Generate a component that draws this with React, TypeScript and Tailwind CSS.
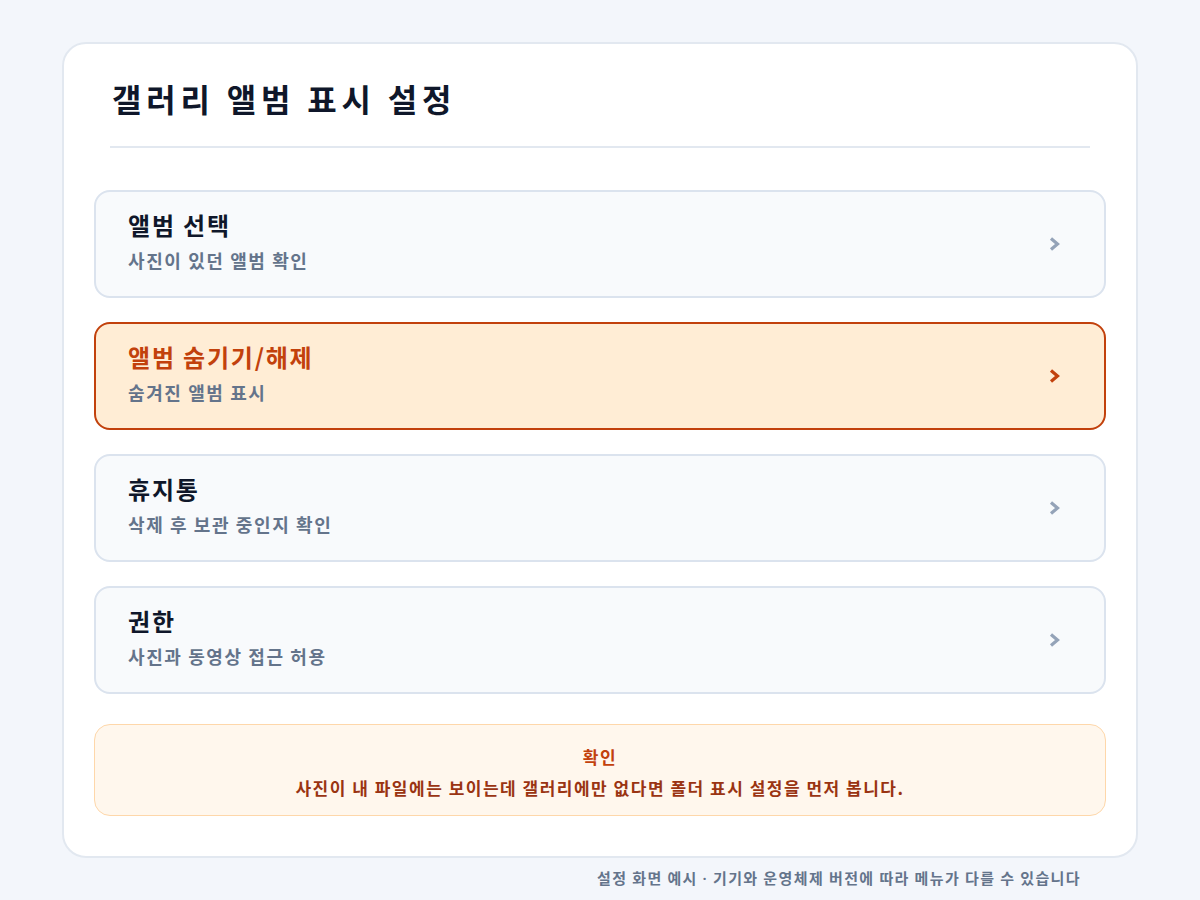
const items = [
  { title: '앨범 선택', desc: '사진이 있던 앨범 확인', active: false },
  { title: '앨범 숨기기/해제', desc: '숨겨진 앨범 표시', active: true },
  { title: '휴지통', desc: '삭제 후 보관 중인지 확인', active: false },
  { title: '권한', desc: '사진과 동영상 접근 허용', active: false },
];

function Chevron({ active }: { active: boolean }) {
  return (
    <svg
      width="14"
      height="16"
      viewBox="0 0 14 16"
      className={`translate-y-[3px] ${active ? 'text-[#c2410c]' : 'text-[#94a3b8]'}`}
    >
      <path d="M4 2.5 L10.5 8 L4 13.5" fill="none" stroke="currentColor" strokeWidth="3.2" strokeLinejoin="miter" />
    </svg>
  );
}

export default function App() {
  return (
    <div
      className="min-h-screen bg-[#f3f6fb] pt-[42px] px-[62px]"
      style={{ fontFamily: '"Noto Sans CJK KR", "Noto Sans", sans-serif' }}
    >
      <div className="rounded-[24px] border-2 border-[#e2e8f0] bg-white px-[30px] pt-[30px] pb-[40px]">
        <div className="mx-4 pt-[4px] pb-[28px] border-b-2 border-[#e2e8f0]">
          <h1 className="text-[32px] leading-[40px] font-bold tracking-[4.8px] text-[#0f172a] pl-[2px]">
            갤러리 앨범 표시 설정
          </h1>
        </div>
        <div className="mt-[42px] flex flex-col gap-6">
          {items.map((item) => (
            <div
              key={item.title}
              className={`flex items-center justify-between rounded-[16px] border-2 pl-8 pr-[43px] pt-[18px] pb-[24px] ${
                item.active ? 'bg-[#ffedd5] border-[#c2410c]' : 'bg-[#f8fafc] border-[#dbe3ee]'
              }`}
            >
              <div className="flex flex-col gap-[8px]">
                <p
                  className={`text-[24px] leading-[30px] font-bold tracking-[1.8px] ${
                    item.active ? 'text-[#c2410c]' : 'text-[#0f172a]'
                  }`}
                >
                  {item.title}
                </p>
                <p className="text-[18px] leading-[24px] font-semibold tracking-[1.6px] text-[#64748b]">{item.desc}</p>
              </div>
              <Chevron active={item.active} />
            </div>
          ))}
          <div className="mt-[6px] rounded-[16px] border border-[#fed7aa] bg-[#fff7ed] pt-[20px] pb-[15px] flex flex-col items-center gap-[7px]">
            <p className="text-[17px] leading-[24px] font-bold tracking-[1.5px] text-[#c2410c]">확인</p>
            <p className="text-[17px] leading-[24px] font-bold tracking-[1.5px] text-[#9a3412]">
              사진이 내 파일에는 보이는데 갤러리에만 없다면 폴더 표시 설정을 먼저 봅니다.
            </p>
          </div>
        </div>
      </div>
      <div className="flex justify-end pr-[57px] mt-[10px]">
        <p className="text-[15px] leading-[20px] font-semibold tracking-[1.4px] text-[#64748b]">
          설정 화면 예시 <span style={{ fontFamily: '"Noto Sans", sans-serif' }}>·</span> 기기와 운영체제 버전에 따라 메뉴가 다를 수
          있습니다
        </p>
      </div>
    </div>
  );
}
